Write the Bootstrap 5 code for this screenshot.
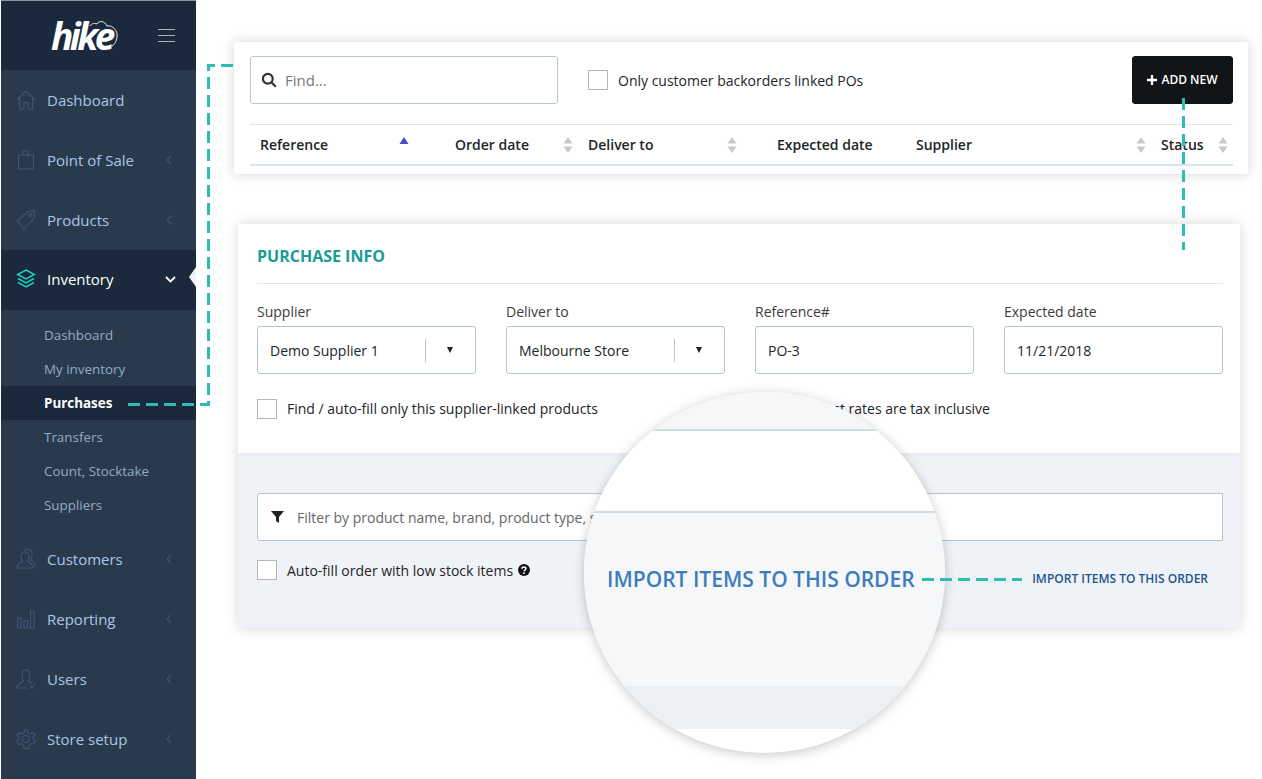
<!DOCTYPE html>
<html lang="en">
<head>
<meta charset="utf-8">
<title>Hike purchases</title>
<link href="https://cdn.jsdelivr.net/npm/bootstrap@5.3.0/dist/css/bootstrap.min.css" rel="stylesheet">
<style>
html,body{margin:0;background:#fff;}
body{font-family:"Open Sans","Liberation Sans",sans-serif;font-size:14px;color:#212529;}
.stage{position:relative;width:1262px;height:779px;overflow:hidden;background:#fff;}
.side{width:195px;margin-left:1px;height:779px;background:#293a4c;border-top:1px solid #8d959d;flex:none;}
.side-head{height:69px;background:#1a2a3c;padding:0 21px 0 50px;}
.logo-word{font-weight:700;font-style:italic;font-size:37px;line-height:1;color:#fff;letter-spacing:-3.5px;}
.logo-wrap{position:relative;}
.logo-cloud{position:absolute;left:37px;top:3px;}
.burger{width:17px;display:flex;flex-direction:column;gap:5px;}
.burger i{display:block;height:1px;background:#aab4be;}
.side-item{height:60px;padding-left:15px;color:#aac6e6;font-size:15px;text-decoration:none;position:relative;}
.side-item svg.ico{width:20px;height:22px;margin-right:11px;flex:none;fill:none;stroke:#3f5676;stroke-width:1.1;}
.side-item .chev{margin-left:auto;margin-right:24px;flex:none;}
.side-item.on{background:#1a2a3c;color:#fff;padding-bottom:2px;}
.side-item.on svg.ico{stroke:#1fd0bd;stroke-width:1.5;}
.side-item.on .chev{margin-right:20px;}
.notch{position:absolute;right:0;top:17px;width:0;height:0;border-top:10px solid transparent;border-bottom:10px solid transparent;border-right:7px solid #eef1f5;}
.sub-list{padding:8px 0 7px;}
.sub-item{display:block;height:34px;line-height:34px;padding-left:43px;font-size:13.4px;color:#93acc6;text-decoration:none;}
.sub-item.on{background:#1a2a3c;color:#fff;font-weight:700;}
.sheet{background:#fff;box-shadow:0 0 12px rgba(0,0,0,.16);}
.sheet-top{width:1014px;height:132px;margin:42px 0 0 38px;padding:14px 15px 0 16px;}
.sheet-form{width:1002px;height:404px;margin:50px 0 0 42px;}
.find{width:308px;height:48px;border:1px solid #b3c8c8;border-radius:3px;padding-left:10px;gap:8px;color:#777;font-size:15px;}
.tick{width:20px;height:20px;border:1px solid #b9b5b0;background:#fff;flex:none;}
.tick-gap{margin-left:30px;}
.tick-text{margin-left:10px;font-size:14px;color:#212529;}
.btn-add{width:101px;height:48px;background:#111518;border-color:#111518;color:#fff;font-size:12px;font-weight:600;border-radius:3px;padding:0;gap:4px;}
.sort-head{table-layout:fixed;width:983px;margin:20px 0 0 0;border-top:1px solid #e1e4e8;}
.sort-head th{height:40px;padding:0 0 0 10px;font-weight:600;font-size:14px;color:#212529;vertical-align:middle;border-bottom:2px solid #d9e3eb;position:relative;background:transparent;box-shadow:none;}
.sort-mark{position:absolute;right:5px;top:12px;}
.w-a{width:164px;}.w-b{width:31px;}.w-c{width:133px;}.w-d{width:164px;}.w-e{width:25px;}.w-f{width:139px;}.w-g{width:245px;}.w-h{width:82px;}
.form-top{padding:20px 17px 0 19px;height:229px;}
.form-title{font-size:16px;font-weight:700;color:#189c95;line-height:24px;margin:0;padding-bottom:15px;border-bottom:1px solid #e2e5e8;}
.cols{--bs-gutter-x:30px;margin-top:18px;}
.field-label{display:block;font-size:14px;line-height:20px;color:#3c3c3c;margin-bottom:4px;}
.field{height:48px;border:1px solid #b3c8c8;border-radius:3px;padding:0 12px;font-size:14px;color:#212529;box-shadow:none;}
.pick-line{width:1px;height:23px;background:#b3c8c8;margin-left:auto;}
.pick-caret{margin:0 22px 0 21px;}
.pick-box{padding-right:0;}
.tick-row{margin-top:24px;}
.tax-on{margin-left:218px;}
.form-low{background:#eff2f6;height:175px;padding:40px 17px 0 19px;box-shadow:inset 0 6px 6px -6px rgba(0,0,0,.08);}
.filter{height:48px;border:1px solid #b3c8c8;border-radius:3px 0 0 3px;background:#fff;padding-left:13px;color:#666;font-size:14px;gap:13px;}
.low-row{margin-top:19px;height:20px;}
.help{margin-left:5px;}
.import-link{align-self:flex-start;margin:10px 15px 0 auto;font-size:12px;font-weight:600;color:#1c5590;text-decoration:none;}
.lens{position:absolute;left:584px;top:392px;width:361px;height:361px;border-radius:50%;overflow:hidden;box-shadow:0 2px 12px rgba(0,0,0,.22);background:#fff;}
.lens-a{height:37px;background:#f5f7f9;}
.lens-line{height:2px;background:#cfdcdc;}
.lens-b{height:80px;background:#fff;}
.lens-c{height:173px;background:#f6f7f9;padding:52px 0 0 23px;font-size:21px;font-weight:600;line-height:28px;color:#3d7dbd;white-space:nowrap;}
.lens-d{height:43px;background:#eceff3;}
.links{position:absolute;left:0;top:0;pointer-events:none;}
.links path{fill:none;stroke:#2dbdb5;stroke-width:3;stroke-dasharray:12 6;}
</style>
</head>
<body>
<div class="stage d-flex">
  <aside class="side">
    <div class="side-head d-flex align-items-center justify-content-between">
      <div class="logo-wrap">
        <span class="logo-word">hike</span>
        <svg class="logo-cloud" width="31" height="28" viewBox="0 0 31 28" fill="none" stroke="#e8eef3" stroke-width="1"><path d="M2 6C4 3 7 3 9 4C11 0 17 1 19 6C25 5 30 11 29 17C28 22 27 24 24 26"/></svg>
      </div>
      <div class="burger"><i></i><i></i><i></i></div>
    </div>
    <nav class="d-flex flex-column">
      <a class="side-item d-flex align-items-center" href="#">
        <svg class="ico" viewBox="0 0 20 22"><path d="M1 11L10 2L19 11M3.500 9V20H8V13.500H12V20H16.500V9"/></svg>Dashboard</a>
      <a class="side-item d-flex align-items-center" href="#">
        <svg class="ico" viewBox="0 0 20 22"><path d="M2.500 6H17.500V20H2.500ZM7 6V2H12V9"/></svg>Point of Sale
        <svg class="chev" width="6" height="10" viewBox="0 0 6 10" fill="none" stroke="#3f5676" stroke-width="1.100"><path d="M5 1L1 5L5 9"/></svg></a>
      <a class="side-item d-flex align-items-center" href="#">
        <svg class="ico" viewBox="0 0 20 22"><path d="M1 12L12 2.500L18.500 1.500V8.500L8 20ZM14.500 4.500a1.500 1.500 0 1 0 .01 0"/></svg>Products
        <svg class="chev" width="6" height="10" viewBox="0 0 6 10" fill="none" stroke="#3f5676" stroke-width="1.100"><path d="M5 1L1 5L5 9"/></svg></a>
      <a class="side-item on d-flex align-items-center" href="#">
        <svg class="ico" viewBox="0 0 20 22"><path d="M10 2L18.500 6.500L10 11L1.500 6.500ZM2 10.500L10 15L18 10.500M2 14.500L10 19L18 14.500"/></svg>Inventory
        <svg class="chev" width="11" height="7" viewBox="0 0 11 7" fill="none" stroke="#fff" stroke-width="1.800"><path d="M1 1L5.500 5.500L10 1"/></svg>
        <span class="notch"></span></a>
      <div class="sub-list">
        <a class="sub-item" href="#">Dashboard</a>
        <a class="sub-item" href="#">My inventory</a>
        <a class="sub-item on" href="#">Purchases</a>
        <a class="sub-item" href="#">Transfers</a>
        <a class="sub-item" href="#">Count, Stocktake</a>
        <a class="sub-item" href="#">Suppliers</a>
      </div>
      <a class="side-item d-flex align-items-center" href="#">
        <svg class="ico" viewBox="0 0 20 22"><path d="M1 20C1 15 5 15 6.500 13.500C4.500 10 4.500 4 9 4C13.500 4 13.500 10 11.500 13.500C13 15 17 15 17 20ZM8 2.500C9 1 15 0 16 5C16.500 8 15.500 10.500 14.500 12C16 13.500 19.500 14 19.500 18"/></svg>Customers
        <svg class="chev" width="6" height="10" viewBox="0 0 6 10" fill="none" stroke="#3f5676" stroke-width="1.100"><path d="M5 1L1 5L5 9"/></svg></a>
      <a class="side-item d-flex align-items-center" href="#">
        <svg class="ico" viewBox="0 0 20 22"><path d="M1.500 10H5V20H1.500ZM8 12.500H11.500V20H8ZM14.500 3H18V20H14.500Z"/></svg>Reporting
        <svg class="chev" width="6" height="10" viewBox="0 0 6 10" fill="none" stroke="#3f5676" stroke-width="1.100"><path d="M5 1L1 5L5 9"/></svg></a>
      <a class="side-item d-flex align-items-center" href="#">
        <svg class="ico" viewBox="0 0 20 22"><path d="M1 20C1 15 5.500 15 7.500 13C5 9.500 5 2 10 2C15 2 15 9.500 12.500 13C13.500 14 15 14.600 16 15.200M11 20H1M14 18L16 20L19 16"/></svg>Users
        <svg class="chev" width="6" height="10" viewBox="0 0 6 10" fill="none" stroke="#3f5676" stroke-width="1.100"><path d="M5 1L1 5L5 9"/></svg></a>
      <a class="side-item d-flex align-items-center" href="#">
        <svg class="ico" viewBox="0 0 20 22"><path d="M8.500 2H11.500L12 5L14.500 6L17 4.500L19 7L17 9L17.500 11.500L19.500 13L18 16L15 15.500L13 17.500L12.500 20.500H8L7.500 17.500L5 15.500L2 16.500L.5 13.500L3 11.500L3 9L.8 7L3 4.500L5.500 6L8 5Z"/><circle cx="10" cy="11" r="3.500"/></svg>Store setup
        <svg class="chev" width="6" height="10" viewBox="0 0 6 10" fill="none" stroke="#3f5676" stroke-width="1.100"><path d="M5 1L1 5L5 9"/></svg></a>
    </nav>
  </aside>

  <main class="flex-grow-1">
    <section class="sheet sheet-top">
      <div class="d-flex align-items-center">
        <div class="find d-flex align-items-center">
          <svg width="16" height="16" viewBox="0 0 16 16" fill="none" stroke="#333" stroke-width="2.200"><circle cx="6.800" cy="6.800" r="4.900"/><path d="M10.500 10.500L14.800 14.800"/></svg>
          <span>Find...</span>
        </div>
        <span class="tick tick-gap"></span>
        <span class="tick-text">Only customer backorders linked POs</span>
        <button class="btn btn-add ms-auto d-flex align-items-center justify-content-center" type="button">
          <svg width="10" height="10" viewBox="0 0 10 10" fill="#fff"><path d="M3.800 0H6.200V3.800H10V6.200H6.200V10H3.800V6.200H0V3.800H3.800Z"/></svg>ADD NEW</button>
      </div>
      <table class="sort-head">
        <colgroup><col class="w-a"><col class="w-b"><col class="w-c"><col class="w-d"><col class="w-e"><col class="w-f"><col class="w-g"><col class="w-h"></colgroup>
        <thead><tr>
          <th>Reference<svg class="sort-mark" width="10" height="7" viewBox="0 0 10 7" fill="#4c4cc4"><path d="M5 0L9.500 7H.5Z"/></svg></th>
          <th></th>
          <th>Order date<svg class="sort-mark" width="10" height="16" viewBox="0 0 10 16" fill="#c9c9c9"><path d="M5 0L9.500 6.500H.5ZM5 16L.5 9.500H9.500Z"/></svg></th>
          <th>Deliver to<svg class="sort-mark" width="10" height="16" viewBox="0 0 10 16" fill="#c9c9c9"><path d="M5 0L9.500 6.500H.5ZM5 16L.5 9.500H9.500Z"/></svg></th>
          <th></th>
          <th>Expected date</th>
          <th>Supplier<svg class="sort-mark" width="10" height="16" viewBox="0 0 10 16" fill="#c9c9c9"><path d="M5 0L9.500 6.500H.5ZM5 16L.5 9.500H9.500Z"/></svg></th>
          <th>Status<svg class="sort-mark" width="10" height="16" viewBox="0 0 10 16" fill="#c9c9c9"><path d="M5 0L9.500 6.500H.5ZM5 16L.5 9.500H9.500Z"/></svg></th>
        </tr></thead>
      </table>
    </section>

    <section class="sheet sheet-form">
      <div class="form-top">
        <h2 class="form-title">PURCHASE INFO</h2>
        <div class="row cols">
          <div class="col-3"><label class="field-label">Supplier</label>
            <div class="field pick-box d-flex align-items-center"><span>Demo Supplier 1</span><span class="pick-line"></span><svg class="pick-caret" width="6" height="6" viewBox="0 0 6 6" fill="#222"><path d="M0 0H6L3 6Z"/></svg></div></div>
          <div class="col-3"><label class="field-label">Deliver to</label>
            <div class="field pick-box d-flex align-items-center"><span>Melbourne Store</span><span class="pick-line"></span><svg class="pick-caret" width="6" height="6" viewBox="0 0 6 6" fill="#222"><path d="M0 0H6L3 6Z"/></svg></div></div>
          <div class="col-3"><label class="field-label">Reference#</label>
            <div class="field d-flex align-items-center">PO-3</div></div>
          <div class="col-3"><label class="field-label">Expected date</label>
            <div class="field d-flex align-items-center">11/21/2018</div></div>
        </div>
        <div class="tick-row d-flex align-items-center">
          <span class="tick"></span><span class="tick-text">Find / auto-fill only this supplier-linked products</span>
          <span class="tax-on">Cost rates are tax inclusive</span>
        </div>
      </div>
      <div class="form-low">
        <div class="filter d-flex align-items-center">
          <svg width="13" height="12" viewBox="0 0 13 12" fill="#222"><path d="M0 0H13L8 6V12L5 10V6Z"/></svg>
          <span>Filter by product name, brand, product type, supplier, tags</span>
        </div>
        <div class="low-row d-flex align-items-center">
          <span class="tick"></span><span class="tick-text">Auto-fill order with low stock items</span>
          <svg class="help" width="12" height="12" viewBox="0 0 12 12"><circle cx="6" cy="6" r="6" fill="#111"/><path d="M4 4.700C4 2.500 8 2.500 8 4.600C8 6 6 6 6 7.300" fill="none" stroke="#fff" stroke-width="1.500"/><rect x="5.200" y="8.300" width="1.600" height="1.600" fill="#fff"/></svg>
          <a class="import-link" href="#">IMPORT ITEMS TO THIS ORDER</a>
        </div>
      </div>
    </section>
  </main>

  <div class="lens">
    <div class="lens-a"></div><div class="lens-line"></div>
    <div class="lens-b"></div><div class="lens-line"></div>
    <div class="lens-c">IMPORT ITEMS TO THIS ORDER</div>
    <div class="lens-d"></div>
  </div>

  <svg class="links" width="1262" height="779" viewBox="0 0 1262 779">
    <path d="M128 404.500H208.500V65.500H233"/>
    <path d="M1183.500 98V250"/>
    <path d="M922 579.500H1022"/>
  </svg>
</div>
<script src="https://cdn.jsdelivr.net/npm/bootstrap@5.3.0/dist/js/bootstrap.bundle.min.js"></script>
</body>
</html>
